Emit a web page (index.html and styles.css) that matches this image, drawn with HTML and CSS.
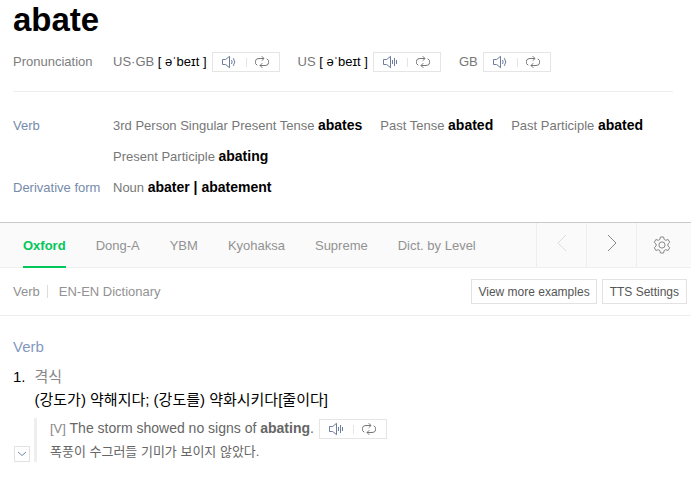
FILE: index.html
```
<!DOCTYPE html>
<html lang="en">
<head>
<meta charset="utf-8">
<meta name="viewport" content="width=device-width, initial-scale=1">
<title>abate - Dictionary</title>
<link rel="stylesheet" href="styles.css">
</head>
<body>
<svg class="sprite" aria-hidden="true">
  <symbol id="speaker" viewBox="0 0 16 14"><path d="M1.5 4.5h3.2L8.5 1.3v11.4L4.7 9.5H1.5z"/><path d="M10.5 5q1.3 2 0 4M12.3 3.2q3 3.8 0 7.6"/></symbol>
  <symbol id="speaker-wave" viewBox="0 0 16 14"><path d="M1.5 4.5h3.2L8.5 1.3v11.4L4.7 9.5H1.5z"/><path d="M10.5 5v4M12.5 3v8M14.5 5v4"/></symbol>
  <symbol id="repeat" viewBox="0 0 14 14"><path d="M2.3 10.2A3.5 3.5 0 0 1 4 3.5H9M6.7 1.2L9 3.5 6.7 5.8M11.7 3.8A3.5 3.5 0 0 1 10 10.5H5M7.3 8.2L5 10.5l2.3 2.3"/></symbol>
</svg>
<header class="entry">
  <h1 class="headword">abate</h1>
  <div class="row pron">
    <span class="label muted">Pronunciation</span>
    <div class="values">
      <div class="sound"><span>US·GB <span class="ipa">[ əˈbeɪt ]</span></span>
        <span class="player"><button type="button" aria-label="Play US and GB"><svg class="speaker"><use href="#speaker"/></svg></button><button type="button" aria-label="Repeat US and GB"><svg class="repeat"><use href="#repeat"/></svg></button></span></div>
      <div class="sound"><span>US <span class="ipa">[ əˈbeɪt ]</span></span>
        <span class="player"><button type="button" aria-label="Play US"><svg class="speaker"><use href="#speaker-wave"/></svg></button><button type="button" aria-label="Repeat US"><svg class="repeat"><use href="#repeat"/></svg></button></span></div>
      <div class="sound"><span>GB</span>
        <span class="player"><button type="button" aria-label="Play GB"><svg class="speaker"><use href="#speaker"/></svg></button><button type="button" aria-label="Repeat GB"><svg class="repeat"><use href="#repeat"/></svg></button></span></div>
    </div>
  </div>
  <div class="forms">
    <div class="row">
      <span class="label">Verb</span>
      <div class="values">
        <span>3rd Person Singular Present Tense <b>abates</b></span>
        <span>Past Tense <b>abated</b></span>
        <span>Past Participle <b>abated</b></span>
        <span>Present Participle <b>abating</b></span>
      </div>
    </div>
    <div class="row">
      <span class="label">Derivative form</span>
      <div class="values"><span>Noun <b>abater | abatement</b></span></div>
    </div>
  </div>
</header>
<nav class="tabbar" aria-label="Dictionaries">
  <div class="tabs">
    <a class="active" href="#oxford">Oxford</a>
    <a href="#donga">Dong-A</a>
    <a href="#ybm">YBM</a>
    <a href="#kyohaksa">Kyohaksa</a>
    <a href="#supreme">Supreme</a>
    <a href="#level">Dict. by Level</a>
  </div>
  <div class="controls">
    <button type="button" class="previous" aria-label="Previous"><svg class="arrow" viewBox="0 0 10 18"><path d="M9 1 1 9l8 8"/></svg></button>
    <button type="button" class="next" aria-label="Next"><svg class="arrow" viewBox="0 0 10 18"><path d="m1 1 8 8-8 8"/></svg></button>
    <button type="button" class="settings" aria-label="Settings"><svg class="gear" viewBox="0 0 18 18"><path d="M7.4 1h3.2l.5 2.4 1.6.9 2.4-.8 1.6 2.8-1.8 1.7v2l1.8 1.7-1.6 2.8-2.4-.8-1.6.9-.5 2.4H7.4l-.5-2.4-1.6-.9-2.4.8-1.6-2.8L3.1 10V8L1.3 6.3l1.6-2.8 2.4.8 1.6-.9z"/><circle cx="9" cy="9" r="3.1"/></svg></button>
  </div>
</nav>
<div class="toolbar">
  <div class="links"><a href="#verb">Verb</a><a href="#enen">EN-EN Dictionary</a></div>
  <div class="actions"><button type="button">View more examples</button><button type="button">TTS Settings</button></div>
</div>
<main class="meanings" id="oxford">
  <h2 id="verb">Verb</h2>
  <div class="sense">
    <span class="number">1.</span>
    <div>
      <p class="register" lang="ko">격식</p>
      <p class="definition" lang="ko">(강도가) 약해지다; (강도를) 약화시키다[줄이다]</p>
    </div>
  </div>
  <div class="example">
    <button type="button" class="expand" aria-label="Expand example"><svg viewBox="0 0 10 6"><path d="m1 1 4 3.5L9 1"/></svg></button>
    <div class="quote">
      <div class="sentence"><span><span class="tag">[V]</span> The storm showed no signs of <b>abating</b>.</span>
        <span class="player"><button type="button" aria-label="Play example"><svg class="speaker"><use href="#speaker-wave"/></svg></button><button type="button" aria-label="Repeat example"><svg class="repeat"><use href="#repeat"/></svg></button></span></div>
      <p class="translation" lang="ko">폭풍이 수그러들 기미가 보이지 않았다.</p>
    </div>
  </div>
</main>
</body>
</html>
```
FILE: styles.css
```
* { box-sizing: border-box; }
body {
  margin: 0;
  background: #fff;
  color: #777;
  font: 13px/20px "Liberation Sans", Arial, "Noto Sans CJK KR", sans-serif;
}
h1, h2, p { margin: 0; font-weight: normal; }
a { color: inherit; text-decoration: none; }
button {
  margin: 0;
  padding: 0;
  border: 0;
  background: none;
  color: inherit;
  font: inherit;
  cursor: pointer;
}
svg { display: block; fill: none; stroke: currentColor; }
.sprite { position: absolute; width: 0; height: 0; }

.entry { padding: 0 13px; }
.headword {
  color: #000;
  font-size: 33px;
  font-weight: bold;
  line-height: 40px;
}
.row { display: flex; }
.label { flex: 0 0 100px; color: #758bab; }
.label.muted { color: #7d7d7d; }
.values { display: flex; flex-wrap: wrap; column-gap: 18px; }
.values b { color: #000; font-size: 14px; }
.ipa { color: #000; }
.pron {
  padding: 12px 0 19px;
  margin-right: 5px;
  border-bottom: 1px solid #eee;
}
.sound, .sentence { display: flex; align-items: center; gap: 5px; }
.player {
  display: flex;
  width: 68px;
  height: 20px;
  border: 1px solid #e5e5e5;
}
.player button { flex: 1; display: grid; place-items: center; }
.player button + button { position: relative; color: #777; }
.player button + button::before {
  content: "";
  position: absolute;
  left: 0;
  top: 5px;
  height: 9px;
  border-left: 1px solid #e5e5e5;
}
.speaker { width: 16px; height: 14px; color: #6b7c9c; }
.repeat { width: 14px; height: 14px; }
.forms { padding: 18px 0 19px; }
.forms .row { line-height: 31px; }

.tabbar {
  display: flex;
  justify-content: space-between;
  height: 46px;
  border-top: 1px solid #c9c9c9;
  border-bottom: 1px solid #eee;
  background: #fafafa;
  color: #929292;
}
.tabs { display: flex; gap: 30px; padding-left: 23px; line-height: 45px; }
.tabs a { height: 45px; white-space: nowrap; }
.tabs .active {
  border-bottom: 2px solid #03c75a;
  color: #03c75a;
  font-weight: bold;
}
.controls { display: flex; }
.controls button {
  display: grid;
  place-items: center;
  width: 50px;
  border-left: 1px solid #eee;
}
.controls .settings { width: 55px; padding-right: 4px; }
.arrow { width: 10px; height: 18px; margin-bottom: 4px; }
.gear { width: 18px; height: 18px; color: #888; }
.previous { color: #ddd; }
.next { color: #888; }
.controls .next { color: #888; }
.controls .previous { color: #ddd; }

.toolbar {
  display: flex;
  align-items: center;
  justify-content: space-between;
  height: 48px;
  padding: 0 4px 0 13px;
  border-bottom: 1px solid #eee;
}
.links { display: flex; align-items: center; color: #929292; }
.links a + a {
  margin-left: 7px;
  padding-left: 11px;
  border-left: 1px solid #ddd;
  line-height: 13px;
}
.actions { display: flex; gap: 5px; }
.actions button {
  height: 25px;
  padding: 0 6px;
  border: 1px solid #e2e2e2;
  color: #555;
  font-size: 12px;
}
.actions button + button { padding: 0 7px; }

.meanings { padding: 20px 13px; }
.meanings h2 { color: #8499bd; font-size: 15px; line-height: 22px; }
.sense {
  display: flex;
  gap: 9px;
  padding-top: 7px;
  color: #000;
  font-size: 15px;
  line-height: 23px;
}
.register { color: #888; }
.example { display: flex; align-items: flex-end; gap: 4px; padding: 7px 0 0 1px; }
.expand {
  display: grid;
  place-items: center;
  width: 16px;
  height: 16px;
  border: 1px solid #e2e2e2;
  color: #758bab;
}
.expand svg { width: 10px; height: 6px; }
.quote { padding-left: 13px; border-left: 3px solid #eee; color: #666; }
.sentence { font-size: 14px; }
.tag { color: #888; font-size: 13px; }
.translation { padding-top: 3px; line-height: 20px; }
```
